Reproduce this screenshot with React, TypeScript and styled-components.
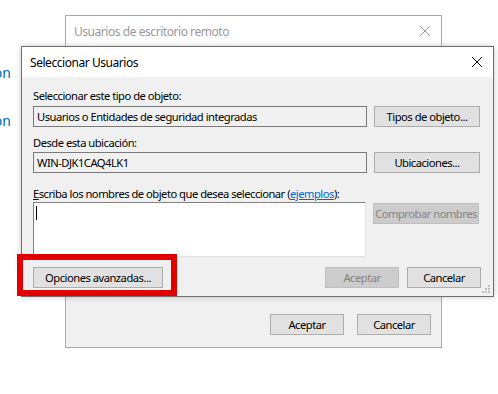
import React from "react";
import styled, { createGlobalStyle } from "styled-components";

const Global = createGlobalStyle`
  html, body { margin: 0; padding: 0; background: #fff; overflow: hidden; }
  * { box-sizing: border-box; }
`;

const Desktop = styled.div`
  position: relative;
  width: 498px;
  height: 394px;
  background: #fff;
  font-family: "Noto Sans", "Open Sans", sans-serif;
  font-size: 11.2px;
  letter-spacing: -0.5px;
  color: #000;
  overflow: hidden;
`;

const SideLinks = styled.div`
  position: absolute;
  right: 487px;
  top: 62px;
  display: flex;
  flex-direction: column;
  gap: 26px;
  text-align: right;
  white-space: nowrap;
`;

const SideLink = styled.span`
  color: #0066b4;
  font-size: 14px;
  letter-spacing: 0;
  line-height: 22px;
`;

const Window = styled.div<{ $active?: boolean; $x: number; $y: number; $w: number; $h: number }>`
  position: absolute;
  left: ${(p) => p.$x}px;
  top: ${(p) => p.$y}px;
  width: ${(p) => p.$w}px;
  height: ${(p) => p.$h}px;
  display: flex;
  flex-direction: column;
  background: #f0f0f0;
  border: 1px solid ${(p) => (p.$active ? "#6e6e6e" : "#aaaaaa")};
  box-shadow: ${(p) => (p.$active ? "0 0 6px rgba(0,0,0,0.22)" : "none")};
`;

const TitleBar = styled.div<{ $active?: boolean }>`
  height: 30px;
  flex: none;
  background: #fff;
  display: flex;
  align-items: center;
  justify-content: space-between;
  padding: 0 10px 0 8px;
  color: ${(p) => (p.$active ? "#000" : "#999")};
  font-size: 12px;
  letter-spacing: -0.45px;
`;

const CloseIcon = ({ color }: { color: string }) => (
  <svg width="12" height="12" viewBox="0 0 12 12">
    <path d="M1 1 L11 11 M11 1 L1 11" stroke={color} strokeWidth="1" fill="none" />
  </svg>
);

const BackBody = styled.div`
  flex: 1;
  display: flex;
  justify-content: flex-end;
  align-items: flex-end;
  gap: 13px;
  padding: 0 10px 12px 0;
`;

const FrontBody = styled.div`
  flex: 1;
  display: flex;
  flex-direction: column;
  padding: 10px 12px 0 11px;
  position: relative;
`;

const Label = styled.div<{ $top: number }>`
  margin-top: ${(p) => p.$top}px;
  line-height: 15px;
  height: 15px;
  white-space: nowrap;
`;

const Row = styled.div<{ $top?: number }>`
  display: flex;
  align-items: flex-start;
  gap: 7px;
  margin-top: ${(p) => p.$top ?? 0}px;
`;

const Field = styled.div`
  width: 334px;
  height: 21px;
  border: 1px solid #7a7a7a;
  background: #f0f0f0;
  padding: 0 3px;
  display: flex;
  align-items: center;
  white-space: nowrap;
`;

const Area = styled.div`
  width: 333px;
  height: 55px;
  background: #fff;
  border-top: 1px solid #828282;
  border-left: 1px solid #828282;
  border-right: 1px solid #e3e3e3;
  border-bottom: 1px solid #e3e3e3;
  padding: 3px 2px;
`;

const Caret = styled.div`
  width: 1px;
  height: 14px;
  background: #000;
`;

const Button = styled.div<{ $w: number; $disabled?: boolean; $top?: number }>`
  width: ${(p) => p.$w}px;
  height: 21px;
  flex: none;
  margin-top: ${(p) => p.$top ?? 0}px;
  display: flex;
  align-items: center;
  justify-content: center;
  background: ${(p) => (p.$disabled ? "#cccccc" : "#e1e1e1")};
  border: 1px solid ${(p) => (p.$disabled ? "#bfbfbf" : "#adadad")};
  color: ${(p) => (p.$disabled ? "#838383" : "#000")};
  white-space: nowrap;
`;

const BottomRow = styled.div`
  display: flex;
  align-items: center;
  margin-top: 10px;
  gap: 8px;
`;

const Spacer = styled.div`
  flex: 1;
`;

const Link = styled.span`
  color: #0066cc;
  text-decoration: underline;
`;

const Accel = styled.span`
  text-decoration: underline;
`;

const Grip = styled.svg`
  position: absolute;
  right: 2px;
  bottom: 2px;
`;

const Highlight = styled.div`
  position: absolute;
  left: 17px;
  top: 254px;
  width: 160px;
  height: 42px;
  border: 6px solid #e00000;
`;

export default function App() {
  return (
    <Desktop>
      <Global />
      <SideLinks>
        <SideLink>Configuración</SideLink>
        <SideLink>Configuración</SideLink>
      </SideLinks>

      <Window $x={65} $y={15} $w={377} $h={333}>
        <TitleBar>
          <span>Usuarios de escritorio remoto</span>
          <CloseIcon color="#9a9a9a" />
        </TitleBar>
        <BackBody>
          <Button $w={74}>Aceptar</Button>
          <Button $w={74}>Cancelar</Button>
        </BackBody>
      </Window>

      <Window $active $x={21} $y={46} $w={473} $h={251}>
        <TitleBar $active>
          <span>Seleccionar Usuarios</span>
          <CloseIcon color="#000" />
        </TitleBar>
        <FrontBody>
          <Label $top={1}>Seleccionar este tipo de objeto:</Label>
          <Row $top={3}>
            <Field>Usuarios o Entidades de seguridad integradas</Field>
            <Button $w={106}>Tipos de objeto...</Button>
          </Row>
          <Label $top={8}>Desde esta ubicación:</Label>
          <Row $top={2}>
            <Field>WIN-DJK1CAQ4LK1</Field>
            <Button $w={106}>Ubicaciones...</Button>
          </Row>
          <Label $top={13}>
            <Accel>E</Accel>scriba los nombres de objeto que desea seleccionar (<Link>ejemplos</Link>):
          </Label>
          <Row $top={1}>
            <Area>
              <Caret />
            </Area>
            <Button $w={106} $disabled $top={1}>
              Comprobar nombres
            </Button>
          </Row>
          <BottomRow>
            <Button $w={130}>Opciones avanzadas...</Button>
            <Spacer />
            <Button $w={74} $disabled>
              Aceptar
            </Button>
            <Button $w={74}>Cancelar</Button>
          </BottomRow>
          <Grip width="10" height="10" viewBox="0 0 10 10">
            {[
              [7, 1],
              [7, 4],
              [4, 4],
              [7, 7],
              [4, 7],
              [1, 7],
            ].map(([x, y], i) => (
              <rect key={i} x={x} y={y} width="2" height="2" fill="#bcbcbc" />
            ))}
          </Grip>
        </FrontBody>
      </Window>

      <Highlight />
    </Desktop>
  );
}
